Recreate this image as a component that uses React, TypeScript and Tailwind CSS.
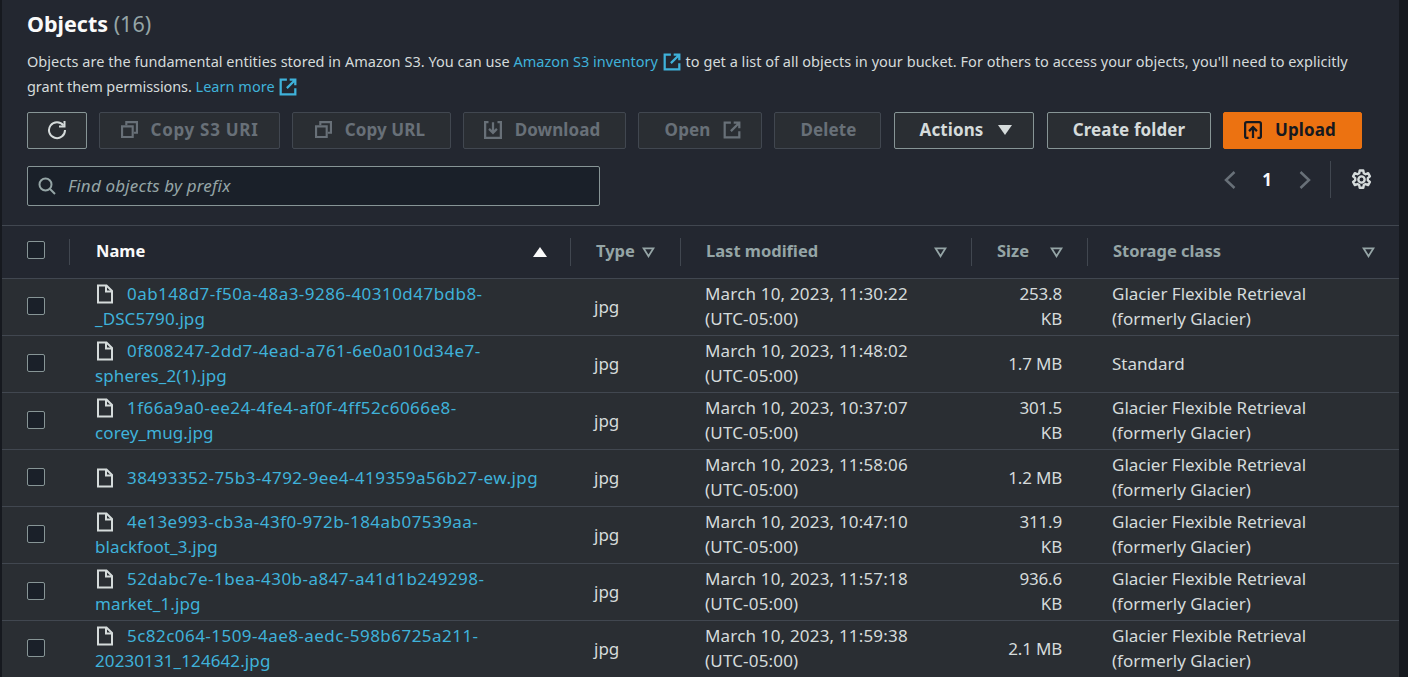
import type { ReactNode } from 'react';

const rows = [
  { name: '0ab148d7-f50a-48a3-9286-40310d47bdb8-', rest: '_DSC5790.jpg', date: 'March 10, 2023, 11:30:22', size: ['253.8', 'KB'], glacier: true },
  { name: '0f808247-2dd7-4ead-a761-6e0a010d34e7-', rest: 'spheres_2(1).jpg', date: 'March 10, 2023, 11:48:02', size: ['1.7 MB'], glacier: false },
  { name: '1f66a9a0-ee24-4fe4-af0f-4ff52c6066e8-', rest: 'corey_mug.jpg', date: 'March 10, 2023, 10:37:07', size: ['301.5', 'KB'], glacier: true },
  { name: '38493352-75b3-4792-9ee4-419359a56b27-ew.jpg', rest: '', date: 'March 10, 2023, 11:58:06', size: ['1.2 MB'], glacier: true },
  { name: '4e13e993-cb3a-43f0-972b-184ab07539aa-', rest: 'blackfoot_3.jpg', date: 'March 10, 2023, 10:47:10', size: ['311.9', 'KB'], glacier: true },
  { name: '52dabc7e-1bea-430b-a847-a41d1b249298-', rest: 'market_1.jpg', date: 'March 10, 2023, 11:57:18', size: ['936.6', 'KB'], glacier: true },
  { name: '5c82c064-1509-4ae8-aedc-598b6725a211-', rest: '20230131_124642.jpg', date: 'March 10, 2023, 11:59:38', size: ['2.1 MB'], glacier: true },
];

function ExternalIcon({ className }: { className: string }) {
  return (
    <svg viewBox="0 0 16 16" fill="none" stroke="currentColor" strokeWidth="2" className={className}>
      <path d="M7 1.5H1.5v13h13V9" />
      <path d="M9.5 1.5h5v5M14.5 1.5 7 9" />
    </svg>
  );
}

function CopyIcon() {
  return (
    <svg viewBox="0 0 16 16" fill="none" stroke="currentColor" strokeWidth="2" className="h-[17px] w-[17px]">
      <path d="M1 5h10v10H1z" />
      <path d="M5 4V1h10v10h-3" />
    </svg>
  );
}

function DownloadIcon() {
  return (
    <svg viewBox="0 0 16 16" fill="none" stroke="currentColor" strokeWidth="2" className="h-[18px] w-[18px]">
      <path d="M4 1H1v14h14V1h-3" />
      <path d="M8 1v9M4.5 7 8 10.5 11.5 7" />
    </svg>
  );
}

function UploadIcon() {
  return (
    <svg viewBox="0 0 16 16" fill="none" stroke="currentColor" strokeWidth="2" className="h-[18px] w-[18px]">
      <path d="M4 15H2.5A1.5 1.5 0 0 1 1 13.5v-11A1.5 1.5 0 0 1 2.5 1h11A1.5 1.5 0 0 1 15 2.5v11a1.5 1.5 0 0 1-1.5 1.5H12" />
      <path d="M8 15V6M4.5 9 8 5.5 11.5 9" />
    </svg>
  );
}

function FileIcon() {
  return (
    <svg viewBox="0 0 16 20" fill="none" stroke="currentColor" strokeWidth="2" className="h-[20px] w-[16px] text-[#d5dbdb]">
      <path d="M1 1.5h8.5L15 7v11.5H1z" />
      <path d="M9 1.5V7.5h6" />
    </svg>
  );
}

function FilterCaret() {
  return (
    <svg viewBox="0 0 14 12" fill="none" stroke="currentColor" strokeWidth="2" className="h-[11px] w-[13px] text-[#95a5a6]">
      <path d="M1.7 1.5h10.6L7 10z" />
    </svg>
  );
}

function ActionButton({ children, className }: { children: ReactNode; className: string }) {
  return (
    <button className={`flex h-[37px] items-center justify-center gap-[13px] rounded-[2px] border pb-[2px] text-[17px] font-bold tracking-[0.1px] ${className}`}>
      {children}
    </button>
  );
}

const disabledBtn = 'border-[#414750] bg-[#2a2e33] text-[#687078]';
const normalBtn = 'border-[#879596] bg-[#2a2e33] text-[#d5dbdb]';

function Divider() {
  return <span className="h-[26px] w-px bg-[#414750]" />;
}

export default function App() {
  return (
    <div className="h-[677px] overflow-hidden bg-[#16191f] pl-[2px] pr-[9px] font-['Noto_Sans',sans-serif] text-[14px] text-[#d5dbdb]">
      <div className="h-full bg-[#232730]">
        <section className="h-[225px] pl-[25px] pr-[37px]">
          <h2 className="pt-[10px] text-[21.5px] leading-[28px] font-bold text-[#fafafa]">
            Objects <span className="font-normal text-[#95a5a6]">(16)</span>
          </h2>
          <p className="mt-[11px] text-[14.5px] leading-[25px] tracking-[0.03px] text-[#d5dbdb]">
            Objects are the fundamental entities stored in Amazon S3. You can use{' '}
            <span className="text-[#3fb2da]">
              Amazon S3 inventory <ExternalIcon className="mx-[1px] inline h-[18px] w-[18px] align-[-4px]" />
            </span>{' '}
            to get a list of all objects in your bucket. For others to access your objects, you'll need to explicitly
            <br />
            <span className="tracking-[-0.1px]">grant them permissions.</span>{' '}
            <span className="text-[#3fb2da]">
              Learn more <ExternalIcon className="mx-[1px] inline h-[18px] w-[18px] align-[-4px]" />
            </span>
          </p>

          <div className="mt-[13px] flex gap-[12px]">
            <ActionButton className={`w-[60px] ${normalBtn}`}>
              <svg viewBox="0 0 20 20" fill="none" stroke="currentColor" strokeWidth="2" className="h-[20px] w-[20px] text-[#d5dbdb]">
                <path d="M16.5 5.5A8 8 0 1 0 18 10" />
                <path d="M17.5 1v5.5H12" />
              </svg>
            </ActionButton>
            <ActionButton className={`w-[181px] tracking-[0.7px] ${disabledBtn}`}>
              <CopyIcon />
              Copy S3 URI
            </ActionButton>
            <ActionButton className={`w-[159px] pr-[3px] ${disabledBtn}`}>
              <CopyIcon />
              Copy URL
            </ActionButton>
            <ActionButton className={`w-[163px] pr-[5px] ${disabledBtn}`}>
              <DownloadIcon />
              Download
            </ActionButton>
            <ActionButton className={`w-[124px] pl-[6px] ${disabledBtn}`}>
              Open
              <ExternalIcon className="h-[18px] w-[18px]" />
            </ActionButton>
            <ActionButton className={`w-[107px] pl-[2px] ${disabledBtn}`}>Delete</ActionButton>
            <ActionButton className={`ml-px w-[140px] gap-[15px] pl-[4px] ${normalBtn}`}>
              Actions
              <span className="h-0 w-0 border-x-[7px] border-t-[10px] border-x-transparent border-t-[#d5dbdb]" />
            </ActionButton>
            <ActionButton className={`ml-px w-[164px] ${normalBtn}`}>Create folder</ActionButton>
            <ActionButton className="w-[139px] border-[#ec7211] bg-[#ec7211] pr-[5px] text-[#16191f]">
              <UploadIcon />
              Upload
            </ActionButton>
          </div>

          <div className="mt-[17px] flex items-start justify-between">
            <div className="flex h-[40px] w-[573px] items-center gap-[12px] rounded-[2px] border border-[#879596] bg-[#1a2029] pl-[10px]">
              <svg viewBox="0 0 18 18" fill="none" stroke="currentColor" strokeWidth="2" className="h-[18px] w-[18px] text-[#95a5a6]">
                <circle cx="7.5" cy="7.5" r="6" />
                <path d="m12 12 5 5" />
              </svg>
              <span className="text-[17px] tracking-[0.18px] text-[#95a5a6] italic">Find objects by prefix</span>
            </div>
            <div className="-mt-[5px] -mr-[10px] flex h-[37px] items-center text-[#687078]">
              <svg viewBox="0 0 12 18" fill="none" stroke="currentColor" strokeWidth="2.5" className="h-[18px] w-[12px]">
                <path d="M10.5 1 2 9l8.5 8" />
              </svg>
              <span className="mr-[27px] ml-[26px] text-[17px] font-bold text-[#fafafa]">1</span>
              <svg viewBox="0 0 12 18" fill="none" stroke="currentColor" strokeWidth="2.5" className="h-[18px] w-[12px]">
                <path d="M1.5 1 10 9l-8.5 8" />
              </svg>
              <span className="mr-[20px] ml-[19px] h-[37px] w-px bg-[#414750]" />
              <svg viewBox="0 0 20 20" fill="none" stroke="currentColor" strokeWidth="2.3" strokeLinejoin="round" className="h-[21px] w-[21px] text-[#d5dbdb]">
                <circle cx="10" cy="10" r="3" />
                <path d="M8.3 1.5h3.4l.5 2.6 1.7.9 2.4-1 1.7 3-2 1.7v2l2 1.6-1.7 3-2.4-1-1.7 1-.5 2.6H8.3l-.5-2.6-1.7-1-2.4 1-1.7-3 2-1.6v-2l-2-1.7 1.7-3 2.4 1 1.7-.9z" />
              </svg>
            </div>
          </div>
        </section>

        <div className="grid h-[54px] grid-cols-[68px_500px_110px_291px_116px_312px] items-center border-y border-[#414750] text-[16.5px] font-bold text-[#95a5a6]">
          <div className="flex items-center justify-between pl-[25px]">
            <span className="mb-[4px] h-[18px] w-[18px] rounded-[2px] border border-[#879596] bg-[#1a2029]" />
            <Divider />
          </div>
          <div className="flex items-center justify-between pr-[23px] pl-[26px] text-[#fafafa]">
            <span className="mb-[2px]">Name</span>
            <span className="h-0 w-0 border-x-[7px] border-b-[10px] border-x-transparent border-b-[#fafafa]" />
          </div>
          <div className="flex items-center gap-[7px] border-l border-[#414750] pl-[25px] leading-[26px]">
            <span className="mb-[2px]">Type</span> <FilterCaret />
          </div>
          <div className="flex items-center justify-between border-l border-[#414750] pr-[24px] pl-[25px] leading-[26px]">
            <span className="mb-[2px]">Last modified</span> <FilterCaret />
          </div>
          <div className="flex items-center justify-between border-l border-[#414750] pr-[24px] pl-[25px] leading-[26px]">
            <span className="mb-[2px]">Size</span> <FilterCaret />
          </div>
          <div className="flex items-center justify-between border-l border-[#414750] pr-[24px] pl-[25px] leading-[26px]">
            <span className="mb-[2px]">Storage class</span> <FilterCaret />
          </div>
        </div>

        {rows.map((row) => (
          <div
            key={row.name}
            className="grid h-[57px] grid-cols-[68px_500px_110px_291px_116px_312px] items-center border-b border-[#414750] bg-[#2a2e33] text-[17px] leading-[25px]"
          >
            <div className="pl-[25px]">
              <span className="mb-[3px] block h-[18px] w-[18px] rounded-[2px] border border-[#879596] bg-[#1a2029]" />
            </div>
            <div className="pb-[2px] pl-[25px] text-[#3fb2da]">
              <span className="mr-[14px] ml-[2px] inline-block align-[-4px]">
                <FileIcon />
              </span>
              <span className="tracking-[0.46px]">{row.name}</span>
              {row.rest && <br />}
              <span className="tracking-[0.1px]">{row.rest}</span>
            </div>
            <div className="pb-[2px] pl-[24px]">jpg</div>
            <div className="pb-[2px] pl-[25px] tracking-[0.18px]">
              {row.date}
              <br />
              (UTC-05:00)
            </div>
            <div className="pr-[25px] pb-[2px] text-right tracking-[-0.2px]">
              {row.size.map((part) => (
                <div key={part}>{part}</div>
              ))}
            </div>
            <div className="pb-[2px] pl-[25px]">
              {row.glacier ? (
                <>
                  Glacier Flexible Retrieval
                  <br />
                  (formerly Glacier)
                </>
              ) : (
                'Standard'
              )}
            </div>
          </div>
        ))}
      </div>
    </div>
  );
}
